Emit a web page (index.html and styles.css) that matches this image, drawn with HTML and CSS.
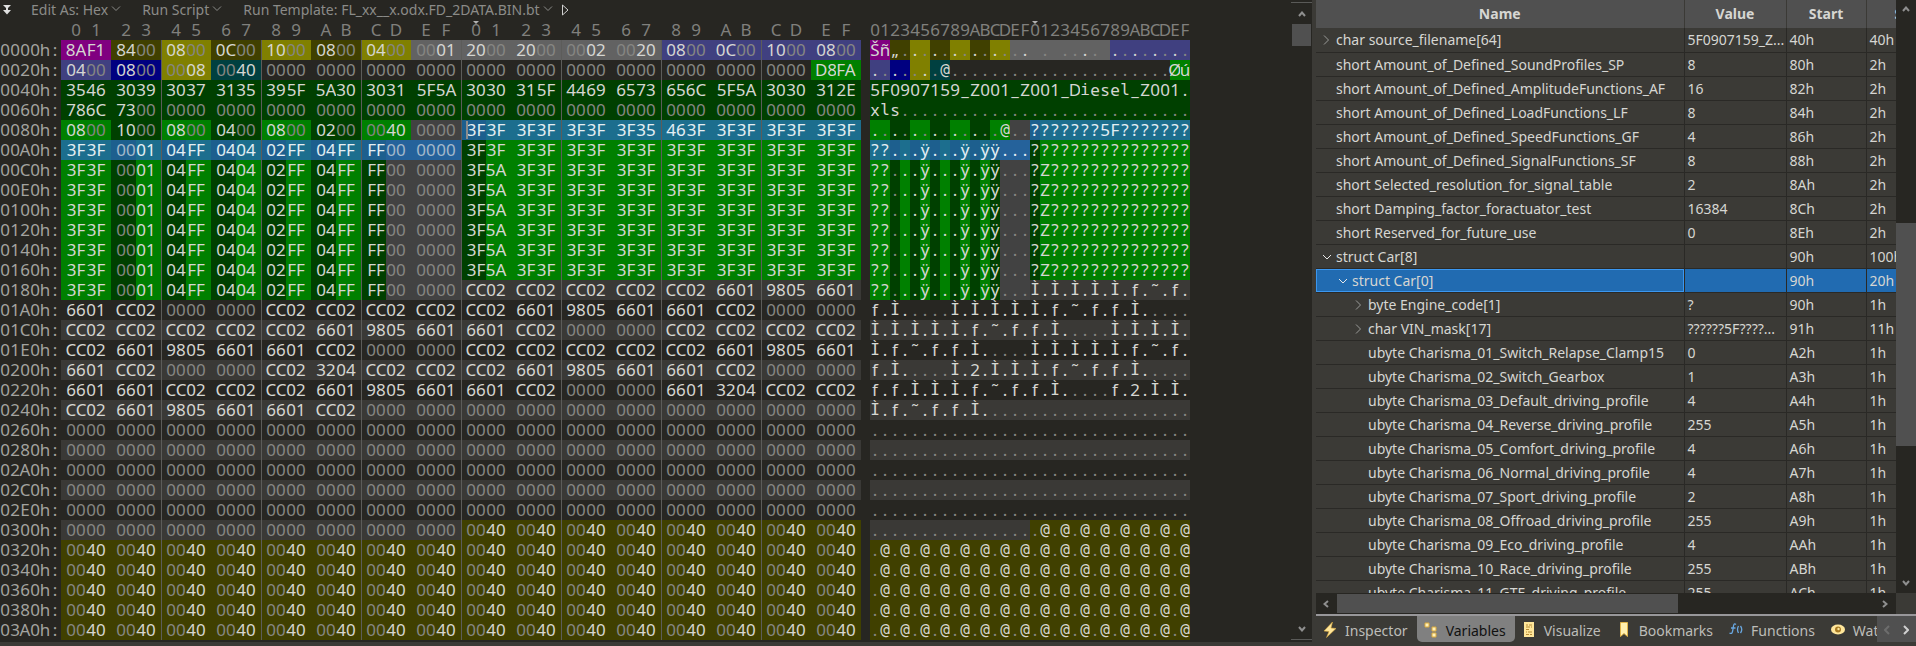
FILE: index.html
```html
<!DOCTYPE html>
<html lang="en">
<head>
    <meta charset="UTF-8">
    <meta name="viewport" content="width=device-width, initial-scale=1.0">
    <title>Hex Editor</title>
    <link rel="stylesheet" href="styles.css">
</head>
<body>

<main class="editor">
    <div class="editor-body">
        <div class="toolbar">
            <button class="expand" aria-label="Expand toolbar">
                <svg width="8" height="10" viewBox="0 0 8 10"><path d="M0 0h8L4 4zM3 3h2v2h3L4 9.500 0 5h3z" fill="#e0e0e0"/></svg>
            </button>
            <button>Edit As: Hex<svg class="chev" width="10" height="6" viewBox="0 0 10 6"><path d="M1 0.500l4 4 4-4"/></svg></button>
            <button>Run Script<svg class="chev" width="10" height="6" viewBox="0 0 10 6"><path d="M1 0.500l4 4 4-4"/></svg></button>
            <button>Run Template: FL_xx__x.odx.FD_2DATA.BIN.bt<svg class="chev" width="10" height="6" viewBox="0 0 10 6"><path d="M1 0.500l4 4 4-4"/></svg></button>
            <button class="run" aria-label="Run template">
                <svg width="7" height="12" viewBox="0 0 7 12"><path d="M0.500 1v10l5.500-5z" fill="none" stroke="#d0d0d0"/></svg>
            </button>
        </div>
        <div class="ruler" id="ruler"></div>
        <div class="hex" id="hex"></div>
    </div>
    <div class="vscroll main-scroll">
        <svg width="8" height="6" viewBox="0 0 8 6"><path d="M1 5l3-3.500L7 5"/></svg>
        <div class="thumb"></div>
        <svg width="8" height="6" viewBox="0 0 8 6"><path d="M1 1l3 3.500L7 1"/></svg>
    </div>
</main>

<aside class="side">
    <div class="vars">
        <div class="vars-view">
            <table>
                <colgroup>
                    <col class="col-name"><col class="col-value"><col class="col-start"><col class="col-size">
                </colgroup>
                <thead>
                    <tr><th>Name</th><th>Value</th><th>Start</th><th>Size</th></tr>
                </thead>
                <tbody id="vars"></tbody>
            </table>
        </div>
        <div class="vscroll vars-scroll">
            <svg width="8" height="6" viewBox="0 0 8 6"><path d="M1 5l3-3.500L7 5"/></svg>
            <div class="thumb"></div>
            <svg width="8" height="6" viewBox="0 0 8 6"><path d="M1 1l3 3.500L7 1"/></svg>
        </div>
        <div class="hscroll">
            <svg width="6" height="8" viewBox="0 0 6 8"><path d="M5 1L1.500 4 5 7"/></svg>
            <div class="thumb"></div>
            <svg width="6" height="8" viewBox="0 0 6 8"><path d="M1 1l3.500 3L1 7"/></svg>
        </div>
    </div>

    <nav class="tabs">
        <div class="tab-list">
            <button>
                <svg width="14" height="16" viewBox="0 0 14 16"><path d="M9.500 0L1 9l5 0.500L3.500 15.500 13 6.500 8 6z" fill="#ffe69a" stroke="#d9a93c" stroke-width="0.600"/></svg>
                Inspector
            </button>
            <button class="active">
                <svg width="14" height="16" viewBox="0 0 14 16"><path d="M1 1h4v4H1zM8 5h4v4H8zM8 11h4v4H8z" fill="#fff0b8" stroke="#d9a93c"/></svg>
                Variables
            </button>
            <button>
                <svg width="14" height="16" viewBox="0 0 14 16"><path d="M2 0h10v15H2z" fill="#ffe69a"/><path d="M4 3h2M7 3h3M4 5h4M9 5h1M4 7.500h3M4 10h1M6 10h4M4 12.500h3M8 12.500h2" stroke="#b58a35"/></svg>
                Visualize
            </button>
            <button>
                <svg width="14" height="16" viewBox="0 0 14 16"><path d="M3.500 0.500h7v14L7 11.500l-3.500 3z" fill="#fff0b0" stroke="#e0b348"/></svg>
                Bookmarks
            </button>
            <button>
                <svg width="14" height="16" viewBox="0 0 14 16"><path d="M7 2.500C4.500 0.500 4.500 4 4 7s-0.800 5.500-3.500 4M2 6h4.500M9.500 4q-2 3.500 0 7M11.500 4q2.500 3.500 0 7" fill="none" stroke="#69a7e0" stroke-width="1.300"/></svg>
                Functions
            </button>
            <button>
                <svg width="14" height="16" viewBox="0 0 14 16"><ellipse cx="7" cy="7.500" rx="7" ry="5" fill="#ffe69a"/><circle cx="7" cy="7.500" r="3" fill="#a87a22"/><circle cx="7.500" cy="7" r="1.200" fill="#ffe69a"/></svg>
                Watch
            </button>
        </div>
        <div class="tab-scroll">
            <button disabled aria-label="Scroll tabs left"><svg width="6" height="10" viewBox="0 0 6 10"><path d="M5 1L1 5l4 4"/></svg></button>
            <button aria-label="Scroll tabs right"><svg width="6" height="10" viewBox="0 0 6 10"><path d="M1 1l4 4-4 4"/></svg></button>
        </div>
    </nav>
</aside>

<script src="app.js"></script>
</body>
</html>
```
FILE: styles.css
```css
* {
    box-sizing: border-box;
}
body {
    margin: 0;
    height: 100vh;
    display: flex;
    overflow: hidden;
    background: #3b3a36;
    color: #d6d6d2;
    font-family: "Noto Sans", "Open Sans", sans-serif;
    font-size: 14px;
}
button {
    background: none;
    border: none;
    padding: 0;
    color: inherit;
    font: inherit;
    white-space: nowrap;
    cursor: pointer;
}

/* hex editor */
.editor {
    flex: 1;
    min-width: 0;
    display: flex;
    margin-bottom: 4px;
    background: #272622;
}
.editor-body {
    flex: 1;
    min-width: 0;
    overflow: hidden;
}
.toolbar {
    display: flex;
    align-items: center;
    height: 20px;
    color: #8b8b88;
    line-height: 20px;
}
.toolbar button {
    margin-right: 21px;
}
.toolbar .expand {
    display: flex;
    margin: 0 20px 0 3px;
}
.toolbar .run {
    display: flex;
    margin-left: -12px;
}
.chev {
    margin-left: 3px;
    vertical-align: 3px;
}
.chev path {
    fill: none;
    stroke: #8b8b88;
}
.ruler, .row {
    display: flex;
    height: 20px;
    line-height: 20px;
    font-size: 17px;
}
.ruler {
    color: #80807d;
    padding-left: 61px;
}
.ruler .byte, .ruler .chr {
    position: relative;
}
.mark::before {
    content: "";
    position: absolute;
    top: 1px;
    left: 12px;
    border: 3px solid transparent;
    border-top-color: #b0b0b0;
    border-bottom: 0;
}
.chr.mark::before {
    left: 2px;
}
.addr {
    width: 61px;
    color: #a3a39f;
    display: flex;
}
.addr span {
    width: 10px;
    display: flex;
    justify-content: center;
}
.bytes, .chars {
    display: flex;
}
.chars {
    margin-left: 9px;
}
.row:nth-child(odd) .bytes, .row:nth-child(odd) .chars {
    background: #3a3936;
}
.byte {
    width: 25px;
    padding-left: 5px;
    display: flex;
    justify-content: center;
    position: relative;
}
.byte:nth-child(even) {
    padding: 0 5px 0 0;
}
.row .byte:nth-child(4n+1):not(:first-child) {
    border-left: 1px solid #5c5c5a;
    padding-left: 4px;
}
.chr {
    width: 10px;
    display: flex;
    justify-content: center;
    white-space: pre;
}
.slab {
    font-family: "DejaVu Sans Mono", monospace;
    font-size: 16px;
}
.zero {
    color: #868683;
}
.caret::after {
    content: "";
    position: absolute;
    left: 4px;
    top: 1px;
    width: 2px;
    height: 18px;
    background: #8c8c8c;
}

/* template colours */
.purple { background: #800080; }
.olive { background: #808000; }
.darkolive { background: #404000; }
.gray { background: #626262; }
.slate { background: #404080; }
.navy { background: #000080; }
.teal { background: #004040; }
.green { background: #008000; }
.darkgreen { background: #004000; }
.dim { background: #424242; }
.selgreen { background: #1c6e8e; }
.seldark { background: #1d5f8e; }
.seldim { background: #25629b; }
.selgreen, .seldark, .seldim { color: #e4eef4; }
.zero.seldark, .zero.seldim { color: #a3b8ca; }
.chr.zero.seldark, .chr.zero.seldim { color: #e4eef4; }

/* scrollbars */
.vscroll, .hscroll {
    display: flex;
    align-items: center;
    background: #272622;
}
.vscroll {
    flex-direction: column;
    width: 21px;
}
.thumb {
    background: #505050;
}
.vscroll path, .hscroll path {
    fill: none;
    stroke: #8f8f8f;
    stroke-width: 2;
}
.main-scroll {
    margin: 2px 0;
    padding: 8px 0 7px;
    border: 1px solid #5a5a58;
    border-width: 1px 0;
}
.main-scroll .thumb {
    width: 19px;
    height: 22px;
    margin: 7px 0 auto;
}

/* variables panel */
.side {
    width: 604px;
    padding-left: 4px;
    display: flex;
    flex-direction: column;
}
.vars {
    flex: 1;
    min-height: 0;
    display: grid;
    grid-template-columns: 1fr 20px;
    grid-template-rows: 1fr 21px;
}
.vars-view {
    overflow: hidden;
}
table {
    table-layout: fixed;
    width: 634px;
    border-collapse: collapse;
}
.col-name { width: 368px; }
.col-value { width: 102px; }
.col-start { width: 80px; }
.col-size { width: 84px; }
th {
    height: 28px;
    padding: 0 0 2px;
    background: #505050;
    border-right: 1px solid #3b3a36;
    text-align: center;
}
td {
    height: 24px;
    padding: 1px 0 0 3px;
    border-right: 1px solid #2a2926;
    border-bottom: 1px solid #2a2926;
    line-height: 22px;
    white-space: nowrap;
}
td:first-child {
    padding-left: 6px;
}
.name {
    display: flex;
    align-items: center;
}
.twist {
    width: 14px;
    display: flex;
    flex: none;
}
.twist path {
    fill: none;
    stroke: #9a9a98;
}
.open .twist path {
    stroke: #e8e8e8;
}
.level1 .name { padding-left: 16px; }
.level2 .name { padding-left: 32px; }
.selected td {
    background: #216bb1;
}
.selected td:first-child {
    box-shadow: inset 0 0 0 1px #3b97f0;
}
.vars-scroll {
    width: 20px;
    padding: 6px 0 7px;
}
.vars-scroll .thumb {
    width: 20px;
    height: 223px;
    margin: 211px 0 auto;
}
.hscroll {
    padding: 0 8px 0 7px;
}
.hscroll .thumb {
    width: 341px;
    height: 19px;
    margin: 0 auto 0 8px;
}

/* bottom tabs */
.tabs {
    display: flex;
    height: 32px;
    padding-bottom: 4px;
    border-top: 2px solid #98979a;
    color: #bdbdb9;
}
.tab-list {
    flex: 1;
    min-width: 0;
    display: flex;
    overflow: hidden;
}
.tab-list button {
    display: flex;
    align-items: center;
    gap: 8px;
    flex: none;
    padding: 2px 9px 0 7px;
}
.tab-list .active {
    background: #808080;
    color: #111;
    border-radius: 0 0 5px 5px;
}
.tab-scroll {
    display: flex;
    width: 39px;
    background: #505050;
}
.tab-scroll button {
    flex: 1;
}
.tab-scroll path {
    fill: none;
    stroke: #d0d0d0;
    stroke-width: 2;
}
.tab-scroll button:disabled path {
    stroke: #6d6d6d;
}
```
FILE: app.js
```js
const DIGITS = '0123456789ABCDEF';

// every Car record starts with the same 16 bytes
const CAR = '3F3F000104FF040402FF04FFFF000000';
const CAR_COLORS = 'green:2 darkgreen:1 green:1 darkgreen:1 green:1 darkgreen:1 green:1 darkgreen:1 green:1 darkgreen:1 green:1 darkgreen:1 dim:3';
const CAR_SELECTED = CAR_COLORS.replace(/darkgreen/g, 'seldark').replace(/\bgreen/g, 'selgreen').replace('dim', 'seldim');
const MASK = ' darkgreen:1 green:15';
const carRow = [CAR + '3F5A' + '3F'.repeat(14), CAR_COLORS + MASK];

// [bytes, colour runs] per line of 32 bytes
const lines = [
    ['8AF1840008000C001000080004000001' + '200020000002002008000C0010000800',
        'purple:2 darkolive:2 olive:2 darkolive:2 olive:2 darkolive:2 olive:2 gray:10 slate:8'],
    ['0400080000080040' + '00'.repeat(22) + 'D8FA', 'slate:2 navy:2 olive:2 teal:2 -:22 green:2'],
    ['3546303930373135395F5A3030315F5A' + '3030315F44696573656C5F5A3030312E', 'darkgreen:32'],
    ['786C73' + '00'.repeat(29), 'darkgreen:32'],
    ['08001000080004000800020000400000' + '3F3F3F3F3F3F3F35463F3F3F3F3F3F3F',
        'green:2 darkgreen:2 green:2 darkgreen:2 green:2 darkgreen:2 green:2 dim:2 seldark:1 selgreen:15'],
    [CAR + '3F'.repeat(16), CAR_SELECTED + MASK],
    carRow, carRow, carRow, carRow, carRow, carRow,
    [CAR + 'CC02CC02CC02CC02CC02660198056601', CAR_COLORS],
    ['6601CC0200000000CC02CC02CC02CC02' + 'CC026601980566016601CC0200000000', ''],
    ['CC02CC02CC02CC02CC02660198056601' + '6601CC0200000000CC02CC02CC02CC02', ''],
    ['CC026601980566016601CC0200000000' + 'CC02CC02CC02CC02CC02660198056601', ''],
    ['6601CC0200000000CC023204CC02CC02' + 'CC026601980566016601CC0200000000', ''],
    ['66016601CC02CC02CC02660198056601' + '6601CC020000000066013204CC02CC02', ''],
    ['CC026601980566016601CC0200000000' + '00'.repeat(16), '']
];
for (let i = 0; i < 5; i++) lines.push(['00'.repeat(32), '']);
lines.push(['00'.repeat(16) + '0040'.repeat(8), '-:16 darkolive:16']);
for (let i = 0; i < 5; i++) lines.push(['0040'.repeat(16), 'darkolive:32']);

function toChar(hex) {
    const code = parseInt(hex, 16);
    const special = { 0x84: '„', 0x8A: 'Š', 0x98: '˜' };
    if (special[code]) return special[code];
    return code < 0x20 ? '.' : String.fromCharCode(code);
}

function expandColors(runs) {
    const colors = [];
    runs.split(' ').filter(Boolean).forEach(run => {
        const [name, count] = run.split(':');
        for (let i = 0; i < count; i++) colors.push(name === '-' ? '' : name);
    });
    return colors;
}

function renderRuler() {
    let bytes = '';
    let chars = '';
    for (let i = 0; i < 32; i++) {
        const mark = i === 16 ? ' mark' : '';
        bytes += `<span class="byte${mark}">${DIGITS[i % 16]}</span>`;
        chars += `<span class="chr${mark}">${DIGITS[i % 16]}</span>`;
    }
    document.getElementById('ruler').innerHTML =
        `<div class="bytes">${bytes}</div><div class="chars">${chars}</div>`;
}

function renderHex() {
    document.getElementById('hex').innerHTML = lines.map(([data, runs], row) => {
        const colors = expandColors(runs);
        const addr = (row * 32).toString(16).toUpperCase().padStart(4, '0') + 'h:';
        let bytes = '';
        let chars = '';
        data.match(/../g).forEach((hex, i) => {
            const ch = toChar(hex);
            const cls = (hex === '00' ? ' zero ' : ' ') + (colors[i] || '');
            const caret = row === 4 && i === 16 ? ' caret' : '';
            // glyphs that are too narrow or too wide for a 10px cell
            const slab = /[ilÌ@]/.test(ch) ? ' slab' : '';
            bytes += `<span class="byte${cls}${caret}">${hex}</span>`;
            chars += `<span class="chr${cls}${slab}">${ch}</span>`;
        });
        const label = [...addr].map(c => `<span>${c}</span>`).join('');
        return `<div class="row"><div class="addr">${label}</div><div class="bytes">${bytes}</div><div class="chars">${chars}</div></div>`;
    }).join('');
}

// level, state, name, value, start, size
const vars = [
    [0, 'closed', 'char source_filename[64]', '5F0907159_Z...', '40h', '40h'],
    [0, '', 'short Amount_of_Defined_SoundProfiles_SP', '8', '80h', '2h'],
    [0, '', 'short Amount_of_Defined_AmplitudeFunctions_AF', '16', '82h', '2h'],
    [0, '', 'short Amount_of_Defined_LoadFunctions_LF', '8', '84h', '2h'],
    [0, '', 'short Amount_of_Defined_SpeedFunctions_GF', '4', '86h', '2h'],
    [0, '', 'short Amount_of_Defined_SignalFunctions_SF', '8', '88h', '2h'],
    [0, '', 'short Selected_resolution_for_signal_table', '2', '8Ah', '2h'],
    [0, '', 'short Damping_factor_foractuator_test', '16384', '8Ch', '2h'],
    [0, '', 'short Reserved_for_future_use', '0', '8Eh', '2h'],
    [0, 'open', 'struct Car[8]', '', '90h', '100h'],
    [1, 'open selected', 'struct Car[0]', '', '90h', '20h'],
    [2, 'closed', 'byte Engine_code[1]', '?', '90h', '1h'],
    [2, 'closed', 'char VIN_mask[17]', '??????5F????...', '91h', '11h'],
    [2, '', 'ubyte Charisma_01_Switch_Relapse_Clamp15', '0', 'A2h', '1h'],
    [2, '', 'ubyte Charisma_02_Switch_Gearbox', '1', 'A3h', '1h'],
    [2, '', 'ubyte Charisma_03_Default_driving_profile', '4', 'A4h', '1h'],
    [2, '', 'ubyte Charisma_04_Reverse_driving_profile', '255', 'A5h', '1h'],
    [2, '', 'ubyte Charisma_05_Comfort_driving_profile', '4', 'A6h', '1h'],
    [2, '', 'ubyte Charisma_06_Normal_driving_profile', '4', 'A7h', '1h'],
    [2, '', 'ubyte Charisma_07_Sport_driving_profile', '2', 'A8h', '1h'],
    [2, '', 'ubyte Charisma_08_Offroad_driving_profile', '255', 'A9h', '1h'],
    [2, '', 'ubyte Charisma_09_Eco_driving_profile', '4', 'AAh', '1h'],
    [2, '', 'ubyte Charisma_10_Race_driving_profile', '255', 'ABh', '1h'],
    [2, '', 'ubyte Charisma_11_GTE_driving_profile', '255', 'ACh', '1h']
];

function twistIcon(state) {
    if (state.startsWith('open')) return '<svg width="10" height="8" viewBox="0 0 10 8"><path d="M1 2l4 4 4-4"/></svg>';
    if (state === 'closed') return '<svg width="9" height="10" viewBox="0 0 9 10"><path d="M2 0.500l4.500 4.500L2 9.500"/></svg>';
    return '';
}

function renderVars() {
    document.getElementById('vars').innerHTML = vars.map(([level, state, name, value, start, size]) => `
        <tr class="level${level} ${state}">
            <td><div class="name"><span class="twist">${twistIcon(state)}</span>${name}</div></td>
            <td>${value}</td><td>${start}</td><td>${size}</td>
        </tr>`).join('');
}

renderRuler();
renderHex();
renderVars();
```
